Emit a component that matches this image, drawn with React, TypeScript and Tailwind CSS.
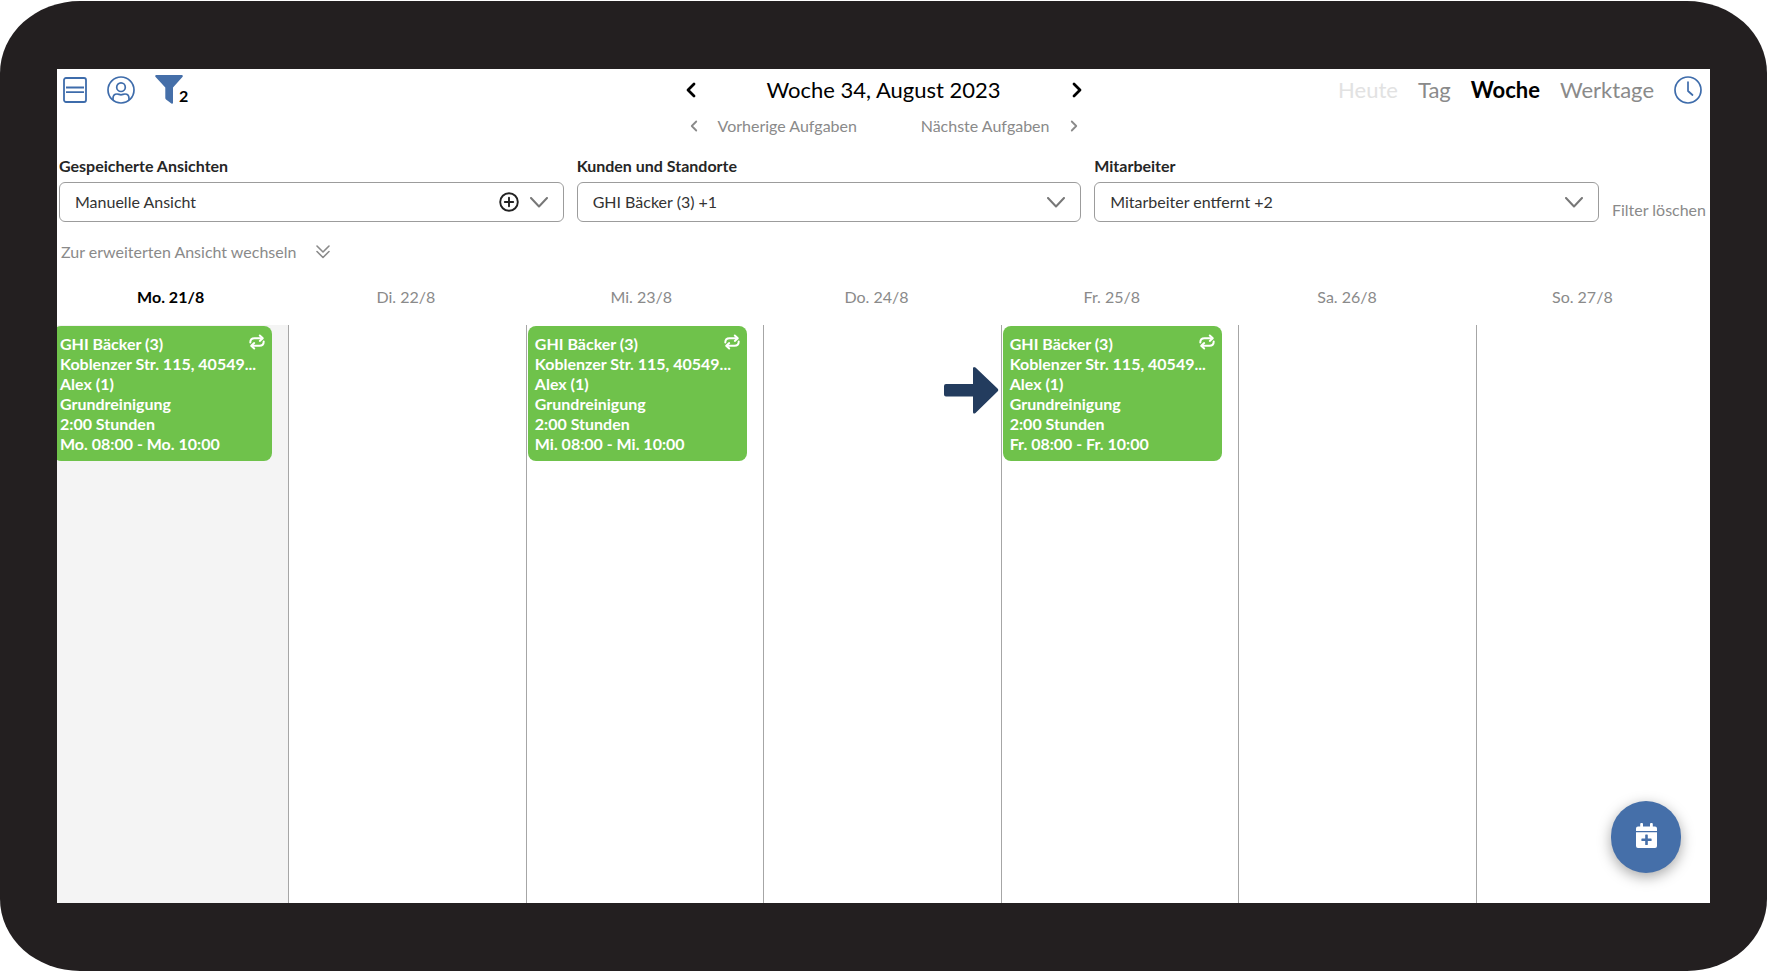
import { clsx } from 'clsx';
import { useState } from 'react';

interface Task {
  customer: string;
  address: string;
  employee: string;
  service: string;
  duration: string;
  time: string;
  marked?: boolean;
}

interface Day {
  label: string;
  active?: boolean;
  task?: Task;
}

const baseTask = {
  customer: 'GHI Bäcker (3)',
  address: 'Koblenzer Str. 115, 40549...',
  employee: 'Alex (1)',
  service: 'Grundreinigung',
  duration: '2:00 Stunden',
};

const DAYS: Day[] = [
  { label: 'Mo. 21/8', active: true, task: { ...baseTask, time: 'Mo. 08:00 - Mo. 10:00' } },
  { label: 'Di. 22/8' },
  { label: 'Mi. 23/8', task: { ...baseTask, time: 'Mi. 08:00 - Mi. 10:00' } },
  { label: 'Do. 24/8' },
  { label: 'Fr. 25/8', task: { ...baseTask, time: 'Fr. 08:00 - Fr. 10:00', marked: true } },
  { label: 'Sa. 26/8' },
  { label: 'So. 27/8' },
];

const VIEWS = ['Heute', 'Tag', 'Woche', 'Werktage'];

function Chevron({ dir, bold }: { dir: 'left' | 'right'; bold?: boolean }) {
  return (
    <svg
      viewBox="0 0 10 16"
      className={bold ? 'w-[10px] h-4' : 'w-2 h-3'}
      fill="none"
      stroke="currentColor"
      strokeWidth={bold ? 2.8 : 2.4}
      strokeLinecap="round"
      strokeLinejoin="round"
    >
      <path d={dir === 'left' ? 'M8 2 2 8l6 6' : 'M2 2l6 6-6 6'} />
    </svg>
  );
}

function RepeatIcon() {
  return (
    <svg viewBox="0 0 16 16" className="size-4 shrink-0" fill="none" stroke="currentColor" strokeWidth="2" strokeLinecap="round" strokeLinejoin="round">
      <path d="M1.300 8.500C1.300 5.600 3 4.200 5.500 4.200h6.500" />
      <path d="M10.800 1.500l3 2.700-3 2.700" />
      <path d="M14.700 7.500c0 2.900-1.700 4.300-4.200 4.300H4" />
      <path d="M5.200 9.100l-3 2.700 3 2.700" />
    </svg>
  );
}

function TaskCard({ task }: { task: Task }) {
  return (
    <div className="relative ml-px mr-4 mt-px rounded-lg bg-[#6fc24b] px-[7px] pt-2 pb-[7px] text-base leading-5 font-bold text-white">
      <div className="flex items-start justify-between">
        <span>{task.customer}</span>
        <RepeatIcon />
      </div>
      <div className="whitespace-nowrap">{task.address}</div>
      <div>{task.employee}</div>
      <div>{task.service}</div>
      <div>{task.duration}</div>
      <div>{task.time}</div>
      {task.marked && (
        <svg viewBox="0 0 55 48" className="absolute right-full top-10 mr-1 h-12 w-[55px]" fill="#233c5e">
          <path d="M2 18h27V2.500Q29 0 31.500 1.500L53.500 22.500Q55 24 53.500 25.500L31.500 47Q29 48.500 29 46V30.500H2Q0 30.500 0 28.500V20Q0 18 2 18Z" />
        </svg>
      )}
    </div>
  );
}

interface FilterSelectProps {
  id: string;
  label: string;
  value: string;
  addable?: boolean;
}

function FilterSelect({ id, label, value, addable }: FilterSelectProps) {
  return (
    <div className="flex-1 min-w-0">
      <label htmlFor={id} className="block text-base leading-6 font-bold text-[#262626]">
        {label}
      </label>
      <div className="relative mt-1">
        <select
          id={id}
          className="block h-10 w-full appearance-none rounded-md border border-[#9c9c9c] bg-white px-[15px] text-base text-[#333]"
        >
          <option>{value}</option>
        </select>
        <svg viewBox="0 0 18 11" className="pointer-events-none absolute right-4 top-[15px] h-[11px] w-[18px]" fill="none" stroke="#777" strokeWidth="2" strokeLinecap="round" strokeLinejoin="round">
          <path d="M1 1l8 8.500L17 1" />
        </svg>
        {addable && (
          <button aria-label="Ansicht hinzufügen" className="absolute right-[45px] top-[10px] text-[#222]">
            <svg viewBox="0 0 20 20" className="size-5" fill="none" stroke="currentColor" strokeWidth="1.900" strokeLinecap="round">
              <circle cx="10" cy="10" r="8.800" />
              <path d="M10 5.800v8.400M5.800 10h8.400" />
            </svg>
          </button>
        )}
      </div>
    </div>
  );
}

export default function App() {
  const [view, setView] = useState('Woche');

  return (
    <div className="min-h-screen bg-white pt-px font-['Lato','Noto_Sans',sans-serif]">
      <div className="flex min-h-[calc(100vh-1px)] flex-col rounded-[80px/72px] bg-[#231f20] px-[57px] py-[68px]">
        <main className="relative flex flex-1 flex-col overflow-hidden bg-white">
          <header className="grid grid-cols-[1fr_auto_1fr] items-start pt-[3px]">
            <div className="flex items-center pl-[6px] pt-[3px] text-[#3e6cab]">
              <button aria-label="Liste">
                <svg viewBox="0 0 24 26" className="h-[26px] w-6" fill="none" stroke="currentColor" strokeWidth="1.800">
                  <rect x="1" y="1" width="22" height="24" rx="2" />
                  <path d="M3 10.500h18M3 15.200h18" />
                </svg>
              </button>
              <button aria-label="Mitarbeiter" className="ml-5">
                <svg viewBox="0 0 28 28" className="size-7" fill="none" stroke="currentColor" strokeWidth="1.700">
                  <circle cx="14" cy="14" r="13" />
                  <circle cx="14" cy="11.200" r="4.300" />
                  <path d="M6 24v-1.500c0-3 2-4.500 4-4.500 1.500 0 2.500.8 4 .8s2.500-.8 4-.8c2 0 4 1.500 4 4.500V24" />
                </svg>
              </button>
              <button aria-label="Filter" className="ml-5 flex items-end">
                <svg viewBox="0 0 28 29" className="h-[29px] w-7" fill="#456fa9">
                  <path d="M1 0h26q1.500.6.400 2L18 12.500V28q-.4 1.200-1.600.5L11 24.500q-.7-.6-.7-1.500V12.500L.6 2Q-.4.600 1 0Z" />
                </svg>
                <span className="-ml-1 text-base leading-4 font-bold text-black">2</span>
              </button>
            </div>

            <div className="w-[396px]">
              <div className="flex h-9 items-center justify-between text-[22px] leading-9 text-black">
                <button aria-label="Vorherige Woche">
                  <Chevron dir="left" bold />
                </button>
                <h1>Woche 34, August 2023</h1>
                <button aria-label="Nächste Woche">
                  <Chevron dir="right" bold />
                </button>
              </div>
              <div className="flex h-9 items-center justify-between px-1 text-base text-[#8a8a8a]">
                <button className="flex items-center gap-5">
                  <Chevron dir="left" />
                  Vorherige Aufgaben
                </button>
                <button className="flex items-center gap-5">
                  Nächste Aufgaben
                  <Chevron dir="right" />
                </button>
              </div>
            </div>

            <nav className="flex h-9 items-center justify-end gap-5 pr-2 text-[22px] leading-9">
              {VIEWS.map(v => (
                <button
                  key={v}
                  onClick={() => setView(v)}
                  className={clsx(
                    v === view ? 'font-bold text-black' : v === 'Heute' ? 'text-[#e2e2e2]' : 'text-[#8a8a8a]'
                  )}
                >
                  {v}
                </button>
              ))}
              <button aria-label="Uhrzeit" className="text-[#3e6cab]">
                <svg viewBox="0 0 28 28" className="size-7" fill="none" stroke="currentColor" strokeWidth="1.700" strokeLinecap="round" strokeLinejoin="round">
                  <circle cx="14" cy="14" r="13" />
                  <path d="M14 6v9l4.500 4" />
                </svg>
              </button>
            </nav>
          </header>

          {/* Filter bar */}
          <section className="mt-[10px] flex gap-[13px] pl-[2px] pr-1">
            <FilterSelect id="views" label="Gespeicherte Ansichten" value="Manuelle Ansicht" addable />
            <FilterSelect id="customers" label="Kunden und Standorte" value="GHI Bäcker (3) +1" />
            <FilterSelect id="employees" label="Mitarbeiter" value="Mitarbeiter entfernt +2" />
            <button className="self-end text-base leading-6 text-[#8a8a8a]">Filter löschen</button>
          </section>

          <button className="mt-[18px] ml-1 flex items-center gap-5 self-start text-base leading-6 text-[#8a8a8a]">
            Zur erweiterten Ansicht wechseln
            <svg viewBox="0 0 14 14" className="size-[14px]" fill="none" stroke="currentColor" strokeWidth="1.600" strokeLinecap="round" strokeLinejoin="round">
              <path d="M1 1l6 6 6-6M1 6.500l6 6 6-6" />
            </svg>
          </button>

          {/* Week */}
          <div className="mt-[21px] mr-[10px] -ml-1 grid grid-cols-7 pb-4 text-center text-base leading-6">
            {DAYS.map(day => (
              <div key={day.label} className={day.active ? 'font-bold text-black' : 'text-[#8a8a8a]'}>
                {day.label}
              </div>
            ))}
          </div>
          <div className="-mr-1 -ml-[5px] grid flex-1 grid-cols-7">
            {DAYS.map(day => (
              <div
                key={day.label}
                className={clsx('min-w-0 border-r border-[#a6a6a6]', day.active && 'bg-[#f4f4f4]')}
              >
                {day.task && <TaskCard task={day.task} />}
              </div>
            ))}
          </div>

          <button
            aria-label="Neue Aufgabe"
            className="absolute right-[29px] bottom-[30px] flex h-[72px] w-[70px] items-center justify-center rounded-full bg-[#456fa9] text-white shadow-[0_4px_14px_rgba(0,0,0,0.35)]"
          >
            <svg viewBox="0 0 21 25" className="mb-1 h-[25px] w-[21px]" fill="currentColor">
              <path d="M5.200 0h.8q1 0 1 1v2.500h7V1q0-1 1-1h.8q1 0 1 1v2.500H19q2 0 2 2V8H0V5.500q0-2 2-2h2.200V1q0-1 1-1Z" />
              <path
                fillRule="evenodd"
                d="M0 9.300h21V23q0 2-2 2H2q-2 0-2-2ZM9.200 12.200v3.300H6q-.6 0-.6.600v1.400q0 .6.600.6h3.200v3.300q0 .6.600.6h1.400q.6 0 .6-.6v-3.300H15q.6 0 .6-.6v-1.400q0-.6-.6-.6h-3.200v-3.300q0-.6-.6-.6H9.800q-.6 0-.6.600Z"
              />
            </svg>
          </button>
        </main>
      </div>
    </div>
  );
}
